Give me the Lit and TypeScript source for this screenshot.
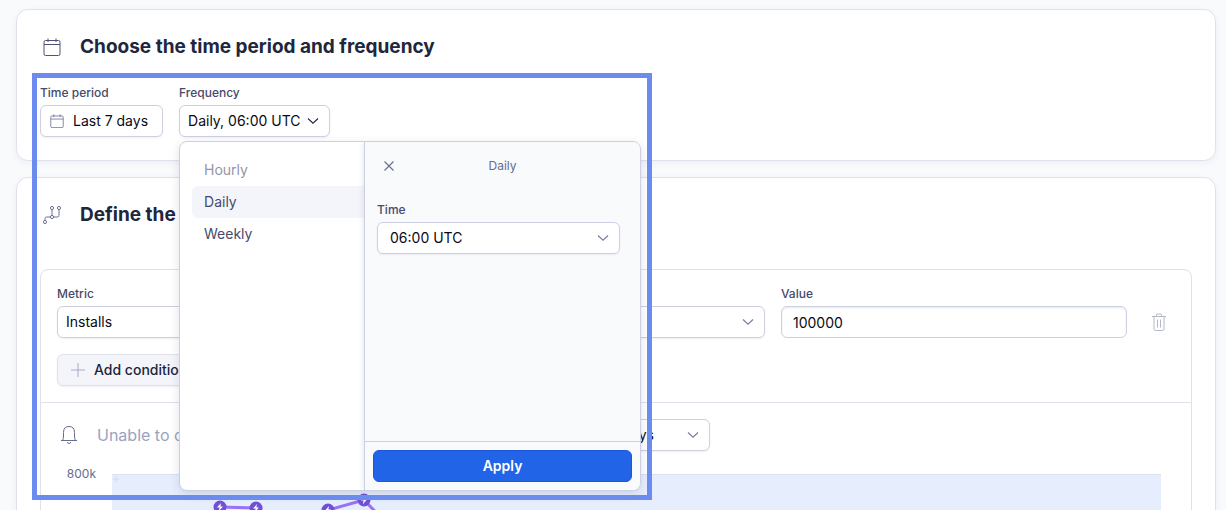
import { LitElement, html, css, svg } from "lit";
import { customElement, state } from "lit/decorators.js";

const calendar = (cls: string) => html`<svg class=${cls} viewBox="0 0 18 18" aria-hidden="true">
  <rect x="1" y="2.5" width="16" height="15" rx="1.5" />
  <path d="M1 6.5H17M5 0.5V4M13 0.5V4" />
</svg>`;

const chevron = (cls = "") => html`<svg class="chevron ${cls}" viewBox="0 0 12 12" aria-hidden="true">
  <path d="M1 3.5L6 8.2L11 3.5" />
</svg>`;

const STEP = 36;
const READINGS: [number, number][] = [
  [3, 32], [4, 33], [5, 66], [6, 35], [7, 25], [8, 62], [9, 78], [10, 70], [11, 84], [12, 76],
];

@customElement("app-root")
export class AppRoot extends LitElement {
  @state() private frequency = "Daily";

  static styles = css`
    :host {
      display: block;
      position: relative;
      height: 100vh;
      overflow: hidden;
      box-sizing: border-box;
      padding: 9px 10px 0 16px;
      background: #f9fafc;
      color: #0a0a14;
      font: 14px/20px Inter, sans-serif;
    }
    *, *::before { box-sizing: border-box; }
    svg { display: block; fill: none; stroke: currentColor; flex: none; }
    button, select, input { font: inherit; color: inherit; margin: 0; }
    .card {
      background: #fff;
      border: 1px solid #dfe1ec;
      border-radius: 12px;
      padding: 23px;
      box-shadow: 0 2px 6px rgba(60, 70, 120, 0.06);
      margin-bottom: 16px;
    }
    .head { display: flex; align-items: center; gap: 16px; height: 28px; }
    h2 { margin: 0; font-size: 19px; line-height: 28px; font-weight: 700; color: #20263c; }
    .head-icon { display: flex; justify-content: center; width: 24px; color: #4d5370; }
    .cal-lg { width: 18px; height: 18px; }
    .flow { width: 20px; height: 20px; color: #6b7190; }
    .settings { display: flex; gap: 16px; margin-top: 24px; }
    .field { display: flex; flex-direction: column; gap: 4px; position: relative; min-width: 0; }
    .label { font-size: 12px; line-height: 16px; font-weight: 500; color: #454b6b; }
    .control {
      display: flex;
      align-items: center;
      height: 32px;
      border: 1px solid #cdd0e2;
      border-radius: 6px;
      background: #fff;
      padding: 0 8px;
      box-shadow: 0 1px 2px rgba(60, 70, 120, 0.08);
    }
    .period { gap: 8px; padding: 0 14px 0 8px; }
    .cal-sm { width: 16px; height: 14px; color: #666c90; }
    .freq { gap: 6px; padding: 0 10px 0 8px; }
    .chevron { width: 12px; height: 12px; color: #767c9a; stroke-width: 1.1; }
    .chevron.dark { color: #20263c; }
    .select { position: relative; display: grid; align-items: center; }
    .select select { width: 100%; appearance: none; grid-area: 1 / 1; }
    .select .chevron { grid-area: 1 / 1; justify-self: end; margin-right: 11px; pointer-events: none; }
    .popup {
      position: absolute;
      z-index: 2;
      top: 56px;
      left: 0;
      width: 462px;
      height: 350px;
      display: flex;
      border: 1px solid #cdd0e2;
      border-radius: 8px;
      background: #fff;
      overflow: hidden;
      box-shadow: 0 3px 10px rgba(60, 70, 120, 0.16);
    }
    .menu { list-style: none; margin: 0; padding: 12px 0 0 12px; width: 184px; }
    .menu button {
      width: 100%;
      height: 32px;
      border: 0;
      border-radius: 6px 0 0 6px;
      background: none;
      padding: 0 12px;
      text-align: left;
      color: #454b6b;
    }
    .menu button:disabled { color: #9396a8; }
    .menu .on { background: #f4f5fa; }
    .pane {
      flex: 1;
      display: flex;
      flex-direction: column;
      background: #f9fafc;
      border-left: 1px solid #cdd0e2;
      box-shadow: 0 0 6px rgba(60, 70, 120, 0.16);
    }
    .pane-head { display: grid; grid-template-columns: 48px 1fr 48px; align-items: center; height: 48px; }
    .pane-head span { text-align: center; font-size: 12px; color: #666c90; }
    .close { border: 0; background: none; padding: 0; height: 24px; display: grid; place-items: center; color: #666c90; }
    .close svg { width: 10px; height: 10px; stroke-width: 1.1; }
    .pane-body { flex: 1; padding: 12px 20px 0 12px; }
    .time { padding: 0 12px; }
    .pane-foot { border-top: 1px solid #cdd0e2; padding: 8px; }
    .apply {
      display: block;
      width: 100%;
      height: 32px;
      border: 1px solid #1d56d8;
      border-radius: 6px;
      background: #2264e8;
      color: #fff;
      font-weight: 600;
    }
    .box { border: 1px solid #dfe1ec; border-radius: 8px; margin-top: 40px; }
    .conditions { padding: 16px; border-bottom: 1px solid #dfe1ec; }
    .row { display: grid; grid-template-columns: 1fr 1fr 1fr 32px; gap: 16px; align-items: end; }
    .value { width: 100%; padding: 0 11px; box-shadow: inset 0 1px 2px rgba(60, 70, 120, 0.12); }
    .trash { height: 32px; border: 0; padding: 0; background: none; display: grid; place-items: center; color: #b4b7c6; }
    .trash svg { width: 16px; height: 18px; }
    .add {
      margin-top: 16px;
      gap: 8px;
      padding: 0 12px;
      background: #f4f5fa;
      border-color: #dfe1ec;
      color: #20263c;
      font-weight: 500;
    }
    .add svg { width: 16px; height: 16px; color: #a6aac2; }
    .summary { display: flex; align-items: center; gap: 8px; padding: 16px 16px 0; }
    .bell { width: 24px; height: 20px; color: #666c90; }
    .note { font-size: 16px; line-height: 24px; color: #9aa2bf; padding-left: 8px; white-space: nowrap; }
    .days { width: 108px; }
    .chart { display: grid; grid-template-columns: 55px 1fr; gap: 16px; padding: 23px 30px 0 0; height: 160px; }
    .tick { text-align: right; font-size: 12px; line-height: 16px; color: #666c90; margin-top: -8px; }
    .plot { background: #e6eefd; border-top: 1px solid #d9e2f4; overflow: hidden; }
    .plot svg { width: 1048px; height: 136px; }
    .series { stroke: #9771f7; stroke-width: 3; }
    .dot { fill: #7050d6; stroke: none; }
    .bolt { fill: #fff; stroke: none; }
    .event { fill: #d6e1f6; stroke: none; }
    .frame {
      position: absolute;
      z-index: 3;
      top: 73px;
      left: 32px;
      width: 620px;
      height: 427px;
      border: 5px solid #6b8cee;
      pointer-events: none;
    }
  `;

  private menuItem(name: string, disabled = false) {
    return html`<li>
      <button class=${this.frequency === name ? "on" : ""} ?disabled=${disabled}
        @click=${() => (this.frequency = name)}>${name}</button>
    </li>`;
  }

  private popup() {
    return html`<div class="popup" role="dialog" aria-label="Frequency">
      <ul class="menu">
        ${this.menuItem("Hourly", true)} ${this.menuItem("Daily")} ${this.menuItem("Weekly")}
      </ul>
      <div class="pane">
        <div class="pane-head">
          <button class="close" aria-label="Close">
            <svg viewBox="0 0 10 10"><path d="M0.5 0.5L9.5 9.5M9.5 0.5L0.5 9.5" /></svg>
          </button>
          <span>${this.frequency}</span>
        </div>
        <div class="pane-body">
          <div class="field">
            <label class="label" for="time">Time</label>
            <div class="select">
              <select class="control time" id="time"><option>06:00 UTC</option></select>
              ${chevron()}
            </div>
          </div>
        </div>
        <div class="pane-foot"><button class="apply">Apply</button></div>
      </div>
    </div>`;
  }

  private plot() {
    const points = READINGS.map(([i, y]) => [i * STEP, y]);
    return html`<svg viewBox="0 0 1048 136" role="img" aria-label="Installs">
      <path class="event" d="M4 1L0.500 5H3L2.500 8L7.500 3.500H4.500L5 1Z" />
      <polyline class="series" points=${points.map((p) => p.join(",")).join(" ")} />
      ${points.map(([x, y]) => svg`
        <circle class="dot" cx=${x} cy=${y} r="6.5" />
        <path class="bolt" d="M${x + 1} ${y - 4}l-4 4.6h2.6l-0.8 3.6l4.2 -4.8h-2.6z" />`)}
    </svg>`;
  }

  render() {
    return html`
      <section class="card">
        <div class="head">
          <span class="head-icon">${calendar("cal-lg")}</span>
          <h2>Choose the time period and frequency</h2>
        </div>
        <div class="settings">
          <div class="field">
            <label class="label" for="period">Time period</label>
            <button class="control period" id="period">${calendar("cal-sm")}Last 7 days</button>
          </div>
          <div class="field">
            <label class="label" for="freq">Frequency</label>
            <button class="control freq" id="freq" aria-expanded="true">
              ${this.frequency}, 06:00 UTC ${chevron("dark")}
            </button>
            ${this.popup()}
          </div>
        </div>
      </section>

      <section class="card">
        <div class="head">
          <span class="head-icon">
            <svg class="flow" viewBox="0 0 20 20" aria-hidden="true">
              <circle cx="3" cy="17" r="1.6" /><circle cx="10" cy="12" r="1.6" />
              <circle cx="10" cy="3" r="1.6" /><circle cx="17" cy="3" r="1.6" />
              <path d="M10 4.6V10.4M17 4.6V10.5Q17 12 15.500 12H11.6M8.400 12H4.500Q3 12 3 13.500V15.400" />
            </svg>
          </span>
          <h2>Define the conditions</h2>
        </div>
        <div class="box">
          <div class="conditions">
            <div class="row">
              <div class="field">
                <label class="label" for="metric">Metric</label>
                <div class="select">
                  <select class="control" id="metric"><option>Installs</option></select>
                  ${chevron()}
                </div>
              </div>
              <div class="field">
                <label class="label" for="operator">Operator</label>
                <div class="select">
                  <select class="control" id="operator"><option>Greater than</option></select>
                  ${chevron()}
                </div>
              </div>
              <div class="field">
                <label class="label" for="value">Value</label>
                <input class="control value" id="value" value="100000" />
              </div>
              <button class="trash" aria-label="Remove condition">
                <svg viewBox="0 0 16 18">
                  <path d="M1 3.500H15M5.500 3.500V1.500Q5.500 1 6 1H10Q10.500 1 10.500 1.500V3.500M3 3.500V16Q3 17.500 4.500 17.500H11.500Q13 17.500 13 16V3.500M6.500 6.500V14.500M9.500 6.500V14.500" />
                </svg>
              </button>
            </div>
            <button class="control add">
              <svg viewBox="0 0 16 16" aria-hidden="true"><path d="M8 1V15M1 8H15" /></svg>Add condition
            </button>
          </div>
          <div class="summary">
            <svg class="bell" viewBox="0 0 24 20" aria-hidden="true">
              <path d="M4 15.500H20M5.500 15.500Q6.500 14 6.500 11V7.500Q6.500 1.500 12 1.500T17.500 7.500V11Q17.500 14 18.500 15.500M10 17.500Q12 19.500 14 17.500" />
            </svg>
            <label class="note" for="days">Unable to calculate how many times this alert would trigger within</label>
            <div class="select days">
              <select class="control" id="days"><option>7 days</option></select>
              ${chevron()}
            </div>
          </div>
          <div class="chart">
            <div class="tick">800k</div>
            <div class="plot">${this.plot()}</div>
          </div>
        </div>
      </section>
      <div class="frame"></div>
    `;
  }
}
